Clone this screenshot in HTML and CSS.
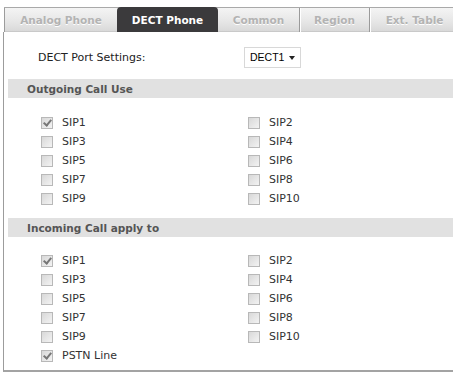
FILE: index.html
```html
<!DOCTYPE html>
<html>
<head>
<meta charset="utf-8">
<link rel="stylesheet" href="styles.css">
</head>
<body>
<div class="page">
  <div class="tabs">
    <div class="tab tab-analog">Analog Phone</div>
    <div class="tab tab-active">DECT Phone</div>
    <div class="tab tab-common">Common</div>
    <div class="tab tab-region">Region</div>
    <div class="tab tab-ext">Ext. Table</div>
  </div>
  <div class="panel">
    <div class="port-row">
      <span class="port-label">DECT Port Settings:</span>
      <span class="select">DECT1<span class="arrow"></span></span>
    </div>

    <div class="section-head">Outgoing Call Use</div>
    <div class="grid grid-out">
      <label class="item"><span class="cb checked"></span>SIP1</label>
      <label class="item"><span class="cb"></span>SIP2</label>
      <label class="item"><span class="cb"></span>SIP3</label>
      <label class="item"><span class="cb"></span>SIP4</label>
      <label class="item"><span class="cb"></span>SIP5</label>
      <label class="item"><span class="cb"></span>SIP6</label>
      <label class="item"><span class="cb"></span>SIP7</label>
      <label class="item"><span class="cb"></span>SIP8</label>
      <label class="item"><span class="cb"></span>SIP9</label>
      <label class="item"><span class="cb"></span>SIP10</label>
    </div>

    <div class="section-head">Incoming Call apply to</div>
    <div class="grid grid-in">
      <label class="item"><span class="cb checked"></span>SIP1</label>
      <label class="item"><span class="cb"></span>SIP2</label>
      <label class="item"><span class="cb"></span>SIP3</label>
      <label class="item"><span class="cb"></span>SIP4</label>
      <label class="item"><span class="cb"></span>SIP5</label>
      <label class="item"><span class="cb"></span>SIP6</label>
      <label class="item"><span class="cb"></span>SIP7</label>
      <label class="item"><span class="cb"></span>SIP8</label>
      <label class="item"><span class="cb"></span>SIP9</label>
      <label class="item"><span class="cb"></span>SIP10</label>
      <label class="item"><span class="cb checked"></span>PSTN Line</label>
    </div>
  </div>
</div>
</body>
</html>
```
FILE: styles.css
```css
html, body {
  margin: 0;
  padding: 0;
  background: #ffffff;
}
body {
  font-family: "DejaVu Sans", Verdana, sans-serif;
  font-size: 11px;
  color: #333;
  width: 453px;
  height: 376px;
  overflow: hidden;
}
.page {
  padding-top: 7px;
  padding-left: 3px;
}
.tabs {
  display: flex;
  height: 25px;
  border-top: 1px solid #a9a9a9;
  box-sizing: border-box;
  background: linear-gradient(#f4f4f4, #e6e6e6 60%, #d9d9d9);
  border-bottom: 1px solid #c9c9c9;
  margin-left: 1px;
}
.tab {
  box-sizing: border-box;
  height: 24px;
  display: flex;
  align-items: center;
  justify-content: center;
  font-weight: bold;
  font-size: 10.5px;
  color: #b3b3b3;
  text-shadow: 0 1px 0 #fff;
}
.tab-analog {
  width: 113px;
  border-left: 1px solid #9c9c9c;
}
.tab-active {
  width: 101px;
  background: #3b3a3c;
  color: #ffffff;
  text-shadow: none;
  border-radius: 4px 4px 0 0;
  height: 25px;
  margin-top: -1px;
  margin-bottom: -1px;
}
.tab-common {
  width: 82px;
  border-right: 1px solid #9a9a9a;
  box-shadow: 1px 0 0 #fff;
}
.tab-region {
  width: 70px;
  border-right: 1px solid #9a9a9a;
  box-shadow: 1px 0 0 #fff;
}
.tab-ext {
  flex: 1;
  padding-left: 6px;
}
.panel {
  border-left: 1px solid #9c9c9c;
  border-bottom: 2px solid #a3a3a3;
  height: 340px;
  box-sizing: border-box;
}
.port-row {
  height: 47px;
  display: flex;
  align-items: center;
  padding-left: 34px;
  box-sizing: border-box;
  padding-top: 3px;
  color: #222;
}
.port-label {
  width: 206px;
}
.select {
  box-sizing: border-box;
  width: 57px;
  height: 21px;
  border: 1px solid #d8d8d8;
  display: flex;
  align-items: center;
  padding-left: 5px;
  font-family: "Liberation Sans", Arial, sans-serif;
  font-size: 10.5px;
  color: #000;
  position: relative;
}
.arrow {
  position: absolute;
  right: 5px;
  top: 8px;
  width: 0;
  height: 0;
  border-left: 3.5px solid transparent;
  border-right: 3.5px solid transparent;
  border-top: 4px solid #222;
}
.section-head {
  margin-left: 4px;
  height: 19px;
  background: #e1e1e1;
  display: flex;
  align-items: center;
  padding-left: 19px;
  font-weight: bold;
  font-size: 10.5px;
  color: #555;
}
.grid {
  display: grid;
  grid-template-columns: 207px auto;
  grid-auto-rows: 19px;
  padding-left: 37px;
}
.grid-out {
  padding-top: 15px;
  padding-bottom: 10px;
}
.grid-in {
  padding-top: 14px;
}
.item {
  display: flex;
  align-items: center;
  color: #333;
}
.cb {
  box-sizing: border-box;
  width: 12px;
  height: 12px;
  border: 1px solid #b8b8b8;
  background: linear-gradient(135deg, #d8d8d8, #f3f3f3);
  margin-right: 9px;
  position: relative;
}
.cb.checked::after {
  content: "";
  position: absolute;
  left: 3px;
  top: 0px;
  width: 3px;
  height: 6px;
  border-right: 2px solid #777;
  border-bottom: 2px solid #777;
  transform: rotate(40deg);
}
```
